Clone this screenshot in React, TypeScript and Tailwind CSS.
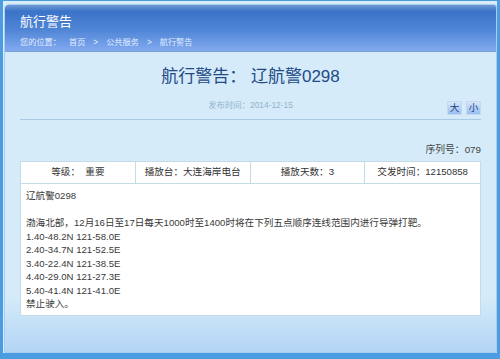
const cells = ['等级：  重要', '播放台：大连海岸电台', '播放天数：3', '交发时间：12150858'];

const lines = [
  '1.40-48.2N 121-58.0E',
  '2.40-34.7N 121-52.5E',
  '3.40-22.4N 121-38.5E',
  '4.40-29.0N 121-27.3E',
  '5.40-41.4N 121-41.0E',
];

export default function App() {
  return (
    <div
      className="w-[500px] h-[359px] bg-[#4c9ce2] pt-px pl-[3px] pr-[3px] pb-[6px] overflow-hidden"
      style={{ fontFamily: '"Liberation Sans", Arial, "Noto Sans CJK SC", sans-serif' }}
    >
      <div className="h-full bg-[#d8ecfa] pt-[3px] pl-px">
        <div className="h-full flex flex-col rounded-tl-[5px] rounded-tr-[3px] border border-[#a9cdf0] overflow-hidden bg-[linear-gradient(to_bottom,#d5ebf9_0%,#d5ebf9_84%,#b3d5f5_100%)]">
          {/* header */}
          <div className="h-[47px] shrink-0 border-b border-[#7c9fd6] bg-[linear-gradient(to_bottom,#6f9ad6_0%,#3a73c8_14%,#5186d6_55%,#82aaf0_100%)] pl-[15px] pt-[9px]">
            <div className="text-[13px] leading-[16px] text-white">航行警告</div>
            <div className="mt-[8px] text-[8.2px] leading-[10px] text-[#e2ecff] flex gap-[8px]">
              <span>您的位置：</span>
              <span>首页</span>
              <span>&gt;</span>
              <span>公共服务</span>
              <span>&gt;</span>
              <span>航行警告</span>
            </div>
          </div>

          {/* body */}
          <div className="flex-1 px-[15px]">
            <h1 className="mt-[14px] text-center text-[17px] leading-[22px] text-[#234a86]">航行警告： 辽航警0298</h1>
            <div className="mt-[12px] text-center text-[8.4px] leading-[10px] text-[#93b3cc]">发布时间：2014-12-15</div>
            <div className="mt-[-9px] flex justify-end gap-[4px] pb-[4px] border-b border-[#a9c9e6]">
              <span className="w-[15px] h-[14px] flex items-center justify-center text-[9.5px] text-[#1d3f7a] bg-[linear-gradient(to_bottom,#d6e6fb,#97bdf0)] border border-[#c3d9f3]">大</span>
              <span className="w-[15px] h-[14px] flex items-center justify-center text-[9.5px] text-[#1d3f7a] bg-[linear-gradient(to_bottom,#d6e6fb,#97bdf0)] border border-[#c3d9f3]">小</span>
            </div>
            <div className="mt-[24px] text-right text-[9.8px] leading-[12px] text-[#444]">序列号：079</div>

            <div className="mt-[5px] bg-white border border-[#c6dbe8] text-[9.6px] text-[#333]">
              <div className="grid grid-cols-4 h-[22px] border-b border-[#c6dbe8]">
                {cells.map((c, i) => (
                  <div key={i} className={`flex items-center justify-center whitespace-pre ${i < 3 ? 'border-r border-[#c6dbe8]' : ''}`}>
                    {c}
                  </div>
                ))}
              </div>
              <div className="px-[5px] pt-[5px] h-[131px] leading-[13.5px] text-[#3a3a3a]">
                <div>辽航警0298</div>
                <div className="h-[13.5px]"></div>
                <div>渤海北部，12月16日至17日每天1000时至1400时将在下列五点顺序连线范围内进行导弹打靶。</div>
                {lines.map((l) => (
                  <div key={l}>{l}</div>
                ))}
                <div>禁止驶入。</div>
              </div>
            </div>
          </div>
        </div>
      </div>
    </div>
  );
}
